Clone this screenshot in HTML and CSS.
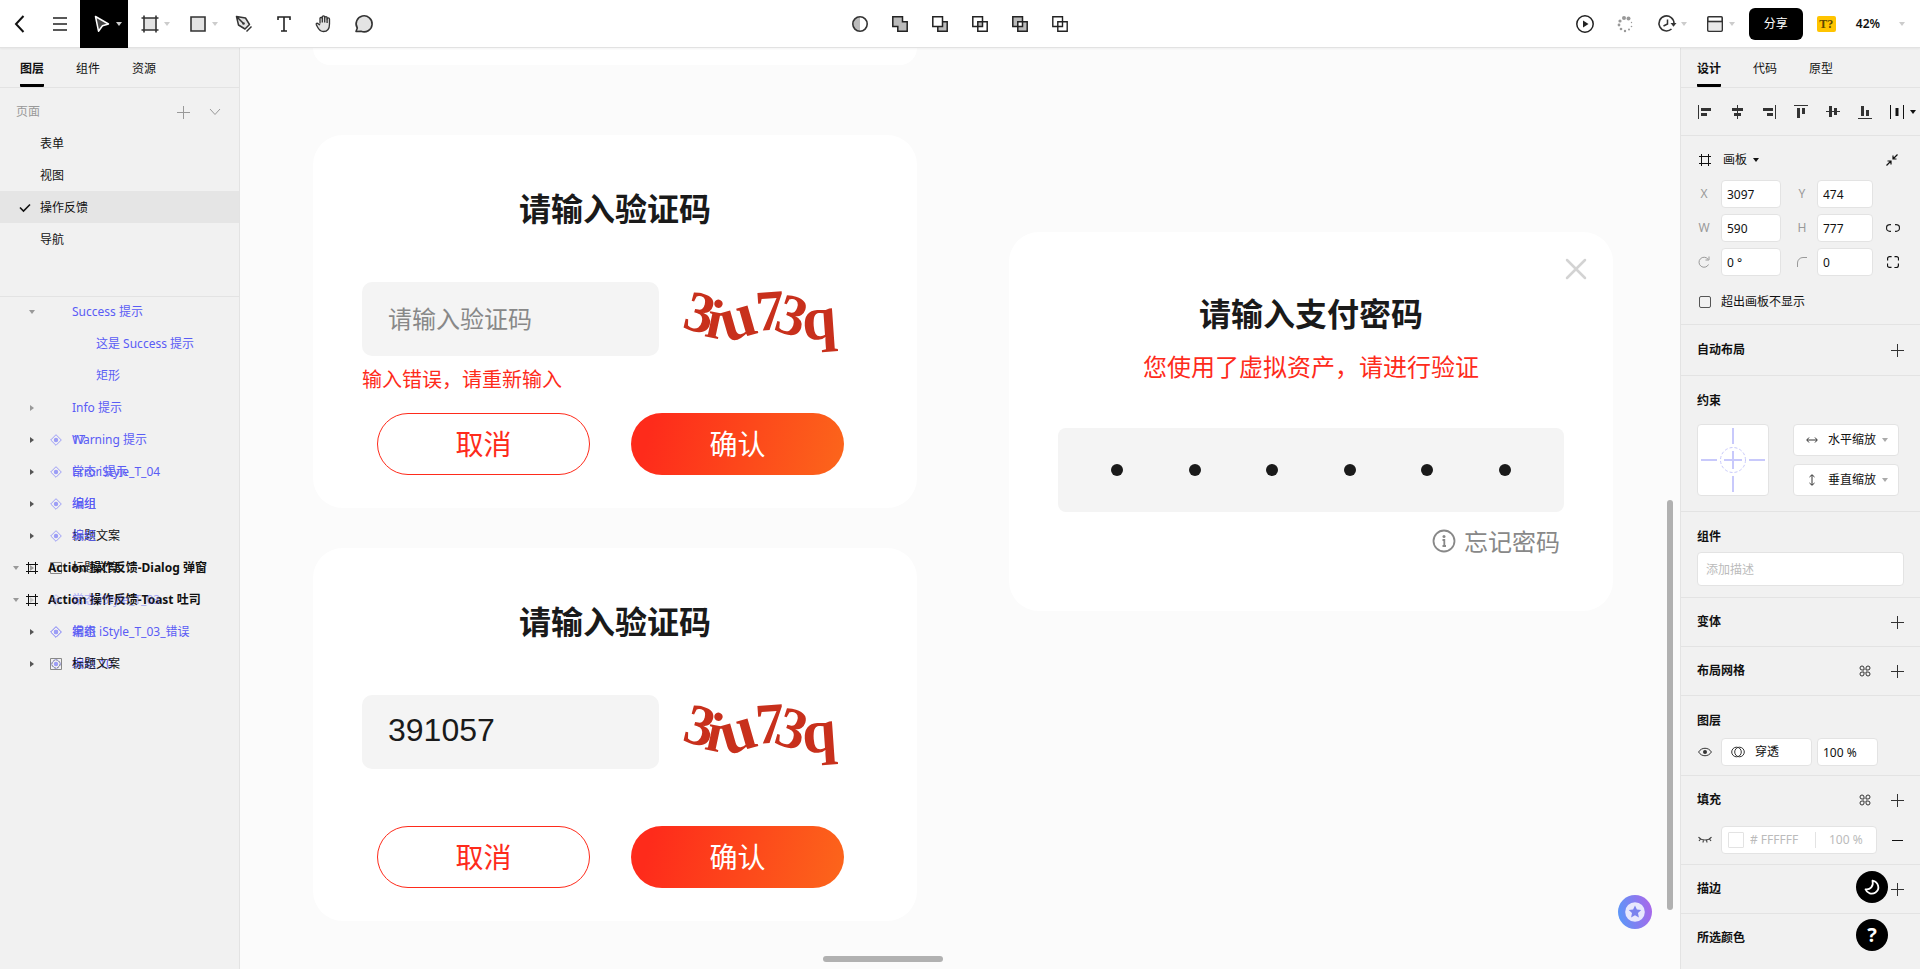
FILE: index.html
```html
<!DOCTYPE html>
<html lang="zh-CN">
<head>
  <meta charset="UTF-8">
  <meta name="viewport" content="width=device-width, initial-scale=1.0">
  <title>操作反馈</title>
  <link rel="stylesheet" href="styles.css">
</head>

<body>
  <!-- shared icons -->
  <svg class="sprite" width="0" height="0" aria-hidden="true">
    <symbol id="i-down" viewBox="0 0 6 4"><path d="M0 0h6L3 4z" fill="currentColor"/></symbol>
    <symbol id="i-right" viewBox="0 0 4 6"><path d="M0 0l4 3-4 3z" fill="currentColor"/></symbol>
    <symbol id="i-plus" viewBox="0 0 13 13"><path d="M6.5 0v13M0 6.5h13" fill="none" stroke="currentColor"/></symbol>
    <symbol id="i-frame" viewBox="0 0 12 12"><path d="M2.500 0v12M9.500 0v12M0 2.500h12M0 9.500h12" fill="none" stroke="currentColor"/></symbol>
    <symbol id="i-comp" viewBox="0 0 12 12"><path d="M6 .7L11.300 6 6 11.300.7 6z" fill="none" stroke="currentColor"/><circle cx="6" cy="6" r="2.200" fill="currentColor"/></symbol>
    <symbol id="i-cmd" viewBox="0 0 12 12"><path d="M5 5H3a2 2 0 1 1 2-2zM7 5V3a2 2 0 1 1 2 2zM7 7h2a2 2 0 1 1-2 2zM5 7v2a2 2 0 1 1-2-2z" fill="none" stroke="currentColor"/></symbol>
  </svg>

  <header class="topbar">
    <div class="tools">
      <button class="tool" aria-label="返回"><svg width="20" height="20" viewBox="0 0 20 20"><path d="M13.500 2L6 10l7.500 8" fill="none" stroke="#111" stroke-width="2"/></svg></button>
      <button class="tool" aria-label="菜单"><svg width="14" height="16" viewBox="0 0 14 16"><path d="M0 2h14M0 8h14M0 14h14" stroke="#222" stroke-width="1.700"/></svg></button>
      <button class="tool tool-wide active" aria-label="选择">
        <svg width="20" height="20" viewBox="0 0 20 20"><path d="M3.500 2.500l13 7.500-6 1.800-4 5.400z" fill="#444" stroke="#fff" stroke-width="1.500" stroke-linejoin="round"/></svg>
        <svg class="caret" width="6" height="4"><use href="#i-down"/></svg>
      </button>
      <button class="tool tool-wide" aria-label="画板">
        <svg width="20" height="20" viewBox="0 0 20 20"><path d="M4 4h12v12H4z" fill="#e3e3e3"/><path d="M4 1.500v17M16 1.500v17M1.500 4h17M1.500 16h17" stroke="#333" stroke-width="1.600"/></svg>
        <svg class="caret" width="6" height="4"><use href="#i-down"/></svg>
      </button>
      <button class="tool tool-wide" aria-label="矩形">
        <svg width="20" height="20" viewBox="0 0 20 20"><path d="M3 3h14v14H3z" fill="#e3e3e3" stroke="#333" stroke-width="1.600"/></svg>
        <svg class="caret" width="6" height="4"><use href="#i-down"/></svg>
      </button>
      <button class="tool" aria-label="钢笔"><svg width="20" height="20" viewBox="0 0 20 20"><path d="M2.500 2.500l9 1.500 4 6.500-4.500 4.500-6.500-4zM3 3l6 6" fill="#e3e3e3" stroke="#333" stroke-width="1.500" stroke-linejoin="round"/><circle cx="9.500" cy="9.500" r="1.300" fill="#333"/><path d="M12.500 17.500l5-5" stroke="#333" stroke-width="1.500"/></svg></button>
      <button class="tool" aria-label="文本"><svg width="20" height="20" viewBox="0 0 20 20"><path d="M4 6V3h12v3M10 3v14M7 17h6" fill="none" stroke="#222" stroke-width="1.600"/></svg></button>
      <button class="tool" aria-label="抓手"><svg width="20" height="20" viewBox="0 0 20 20"><path d="M6 9.500V4.300a1.200 1.200 0 0 1 2.300 0V3a1.200 1.200 0 0 1 2.400 0v.8a1.200 1.200 0 0 1 2.400 0v1.300a1.200 1.200 0 0 1 2.400 0V10c0 5-2 7.500-6 7.500-3 0-4.500-1.500-6-4.500L2.300 10.600c-.4-1 .8-1.800 1.700-1L6 11" fill="#e3e3e3" stroke="#333" stroke-width="1.300" stroke-linejoin="round"/><path d="M8.300 4v4.500M10.700 3.500v5M13.100 4.500v4.500" stroke="#333" stroke-width="1.300"/></svg></button>
      <button class="tool" aria-label="评论"><svg width="20" height="20" viewBox="0 0 20 20"><path d="M2 17.500L3.300 14A8 8 0 1 1 7 17.200z" fill="#e3e3e3" stroke="#333" stroke-width="1.600" stroke-linejoin="round"/></svg></button>
    </div>

    <div class="tools tools-center">
      <button class="tool" aria-label="蒙版"><svg width="18" height="18" viewBox="0 0 18 18"><path d="M9 2a7 7 0 0 0 0 14z" fill="#bbb"/><circle cx="9" cy="9" r="7.200" fill="none" stroke="#333" stroke-width="1.600"/></svg></button>
      <button class="tool" aria-label="联集"><svg width="18" height="18" viewBox="0 0 18 18"><path d="M1.800 1.800h9.700v5h4.700v9.400H6.800v-4.700h-5z" fill="#bbb" stroke="#222" stroke-width="1.500"/></svg></button>
      <button class="tool" aria-label="减去顶层"><svg width="18" height="18" viewBox="0 0 18 18"><path d="M6.800 6.800h9.400v9.400H6.800z" fill="#bbb" stroke="#222" stroke-width="1.500"/><path d="M1.800 1.800h9.700v9.700H1.800z" fill="#fff" stroke="#222" stroke-width="1.500"/></svg></button>
      <button class="tool" aria-label="交集"><svg width="18" height="18" viewBox="0 0 18 18"><path d="M6.800 6.800h4.700v4.700H6.800z" fill="#bbb"/><path d="M1.800 1.800h9.700v9.700H1.800zM6.800 6.800h9.400v9.400H6.800z" fill="none" stroke="#222" stroke-width="1.500"/></svg></button>
      <button class="tool" aria-label="差集"><svg width="18" height="18" viewBox="0 0 18 18"><path d="M1.800 1.800h9.700v9.700H1.800zM6.800 6.800h9.400v9.400H6.800z" fill="#bbb"/><path d="M6.800 6.800h4.700v4.700H6.800z" fill="#fff"/><path d="M1.800 1.800h9.700v9.700H1.800zM6.800 6.800h9.400v9.400H6.800z" fill="none" stroke="#222" stroke-width="1.500"/></svg></button>
      <button class="tool" aria-label="拼合"><svg width="18" height="18" viewBox="0 0 18 18"><path d="M1.800 1.800h9.700v9.700H1.800zM6.800 6.800h9.400v9.400H6.800z" fill="none" stroke="#222" stroke-width="1.400"/></svg></button>
    </div>

    <div class="tools tools-right">
      <button class="tool" aria-label="播放"><svg width="20" height="20" viewBox="0 0 20 20"><circle cx="10" cy="10" r="8.200" fill="none" stroke="#222" stroke-width="1.500"/><path d="M8 6.500l5.500 3.500L8 13.500z" fill="#222"/></svg></button>
      <span class="tool"><svg width="18" height="18" viewBox="0 0 18 18" fill="#999"><circle cx="8" cy="3" r="2"/><circle cx="12.500" cy="3.500" r="2"/><circle cx="4" cy="6" r="1.600"/><circle cx="3" cy="10" r="1.400"/><circle cx="5" cy="14" r="1.300"/><circle cx="9" cy="16" r="1.200"/><circle cx="13" cy="14.500" r="1"/><circle cx="15.500" cy="11.500" r=".8"/><circle cx="15.500" cy="7.500" r=".7"/></svg></span>
      <button class="tool tool-wide" aria-label="历史">
        <svg width="20" height="20" viewBox="0 0 20 20"><path d="M14.500 15A7.500 7.500 0 1 1 17 9.500" fill="none" stroke="#333" stroke-width="1.600"/><path d="M13.500 9h6l-3 3.700z" fill="#333"/><path d="M10.500 5.500V10L6.500 12" fill="none" stroke="#333" stroke-width="1.500"/></svg>
        <svg class="caret" width="6" height="4"><use href="#i-down"/></svg>
      </button>
      <button class="tool tool-wide" aria-label="布局">
        <svg width="20" height="20" viewBox="0 0 20 20"><rect x="2.800" y="2.800" width="14.400" height="14.400" rx="1" fill="#fff" stroke="#333" stroke-width="1.600"/><path d="M3.600 8h12.800v8.400H3.600z" fill="#e9e9e9"/><path d="M3 7.500h14" stroke="#333" stroke-width="1.600"/></svg>
        <svg class="caret" width="6" height="4"><use href="#i-down"/></svg>
      </button>
      <button class="share">分享</button>
      <span class="font-badge">T?</span>
      <button class="zoom-level">42% <svg class="caret" width="6" height="4"><use href="#i-down"/></svg></button>
    </div>
  </header>

  <div class="workspace">
    <aside class="panel panel-left">
      <nav class="tabs">
        <a href="#layers" class="tab current">图层</a>
        <a href="#components" class="tab">组件</a>
        <a href="#assets" class="tab">资源</a>
      </nav>

      <div class="pages">
        <div class="pages-head">
          <span>页面</span>
          <button aria-label="添加页面"><svg width="13" height="13"><use href="#i-plus"/></svg></button>
          <button aria-label="收起"><svg width="12" height="8" viewBox="0 0 12 8"><path d="M1 1l5 5.500L11 1" fill="none" stroke="currentColor"/></svg></button>
        </div>
        <a href="#form" class="page">表单</a>
        <a href="#view" class="page">视图</a>
        <a href="#feedback" class="page selected"><svg width="12" height="10" viewBox="0 0 12 10"><path d="M1 4.500L4.500 8 11 1.500" fill="none" stroke="#111" stroke-width="1.600"/></svg>操作反馈</a>
        <a href="#nav" class="page">导航</a>
      </div>

      <div class="layers">
        <div class="row"><div class="layer comp dim"><svg class="fold" width="6" height="4"><use href="#i-down"/></svg><span class="name">Success 提示</span></div></div>
        <div class="row"><div class="layer comp deep"><span class="name">这是 Success 提示</span></div></div>
        <div class="row"><div class="layer comp deep"><span class="name">矩形</span></div></div>
        <div class="row"><div class="layer comp dim"><svg class="fold" width="4" height="6"><use href="#i-right"/></svg><span class="name">Info 提示</span></div></div>
        <div class="row">
          <div class="layer comp"><span class="name">17</span></div>
          <div class="layer comp"><svg class="fold" width="4" height="6"><use href="#i-right"/></svg><svg class="kind" width="12" height="12"><use href="#i-comp"/></svg><span class="name">Warning 提示</span></div>
        </div>
        <div class="row">
          <div class="layer comp"><span class="name">Error 提示</span></div>
          <div class="layer comp"><svg class="fold" width="4" height="6"><use href="#i-right"/></svg><svg class="kind" width="12" height="12"><use href="#i-comp"/></svg><span class="name">常态 iStyle_T_04</span></div>
        </div>
        <div class="row">
          <div class="layer comp"><span class="name">编组</span></div>
          <div class="layer comp"><svg class="fold" width="4" height="6"><use href="#i-right"/></svg><svg class="kind" width="12" height="12"><use href="#i-comp"/></svg><span class="name">编组</span></div>
        </div>
        <div class="row">
          <div class="layer"><span class="name">标题文案</span></div>
          <div class="layer comp"><svg class="fold" width="4" height="6"><use href="#i-right"/></svg><svg class="kind" width="12" height="12"><use href="#i-comp"/></svg><span class="name">编组</span></div>
        </div>
        <div class="row">
          <div class="layer dim"><svg class="fold" width="4" height="6"><use href="#i-right"/></svg><svg class="kind box" width="12" height="12" viewBox="0 0 12 12"><path d="M.5.5h11v11H.5z" fill="none" stroke="currentColor"/><path d="M3.500 3.500h5v5h-5z" fill="none" stroke="currentColor" stroke-dasharray="1 1"/></svg><span class="name">标题文案</span></div>
          <div class="layer board"><svg class="fold" width="6" height="4"><use href="#i-down"/></svg><svg class="kind" width="12" height="12"><use href="#i-frame"/></svg><span class="name">Action 操作反馈-Dialog 弹窗</span></div>
        </div>
        <div class="row">
          <div class="layer comp faint dim"><svg class="fold" width="4" height="6"><use href="#i-right"/></svg><svg class="kind" width="12" height="12"><use href="#i-comp"/></svg><span class="name">常态 iStyle_T_03</span></div>
          <div class="layer board"><svg class="fold" width="6" height="4"><use href="#i-down"/></svg><svg class="kind" width="12" height="12"><use href="#i-frame"/></svg><span class="name">Action 操作反馈-Toast 吐司</span></div>
        </div>
        <div class="row">
          <div class="layer comp"><svg class="kind" width="12" height="12"><use href="#i-comp"/></svg><span class="name">编组</span></div>
          <div class="layer comp"><svg class="fold" width="4" height="6"><use href="#i-right"/></svg><svg class="kind" width="12" height="12"><use href="#i-comp"/></svg><span class="name">常态 iStyle_T_03_错误</span></div>
        </div>
        <div class="row">
          <div class="layer comp"><svg class="kind" width="12" height="12"><use href="#i-comp"/></svg><span class="name">编组 10</span></div>
          <div class="layer"><svg class="fold" width="4" height="6"><use href="#i-right"/></svg><svg class="kind box" width="12" height="12" viewBox="0 0 12 12"><path d="M.5.5h11v11H.5z" fill="none" stroke="currentColor"/><circle cx="6" cy="6" r="4" fill="none" stroke="currentColor" stroke-dasharray="2 1"/></svg><span class="name">标题文案</span></div>
        </div>
      </div>
    </aside>

    <main class="canvas">
      <div class="column">
        <section class="card card-cut"></section>

        <section class="card">
          <h2 class="card-title">请输入验证码</h2>
          <div class="captcha-row">
            <input class="field" type="text" placeholder="请输入验证码" aria-label="验证码">
            <svg class="captcha" width="160" height="76" viewBox="0 0 160 76" role="img" aria-label="3iu73q">
              <text x="21" y="50" font-size="58" transform="rotate(15 21 31)">3</text>
              <text x="36" y="56" font-size="56" transform="rotate(12 36 37)">i</text>
              <text x="60" y="56" font-size="64" transform="rotate(-16 60 42)">u</text>
              <text x="91" y="48" font-size="58" transform="rotate(-4 91 29)">7</text>
              <text x="113" y="53" font-size="58" transform="rotate(18 113 34)">3</text>
              <text x="141" y="57" font-size="62" transform="rotate(-4 141 49)">q</text>
            </svg>
          </div>
          <p class="error">输入错误，请重新输入</p>
          <div class="actions">
            <button class="btn">取消</button>
            <button class="btn btn-primary">确认</button>
          </div>
        </section>

        <section class="card">
          <h2 class="card-title">请输入验证码</h2>
          <div class="captcha-row">
            <input class="field" type="text" value="391057" aria-label="验证码">
            <svg class="captcha" width="160" height="76" viewBox="0 0 160 76" role="img" aria-label="3iu73q">
              <text x="21" y="50" font-size="58" transform="rotate(15 21 31)">3</text>
              <text x="36" y="56" font-size="56" transform="rotate(12 36 37)">i</text>
              <text x="60" y="56" font-size="64" transform="rotate(-16 60 42)">u</text>
              <text x="91" y="48" font-size="58" transform="rotate(-4 91 29)">7</text>
              <text x="113" y="53" font-size="58" transform="rotate(18 113 34)">3</text>
              <text x="141" y="57" font-size="62" transform="rotate(-4 141 49)">q</text>
            </svg>
          </div>
          <p class="error"></p>
          <div class="actions">
            <button class="btn">取消</button>
            <button class="btn btn-primary">确认</button>
          </div>
        </section>
      </div>

      <div class="column column-pay">
        <section class="card card-pay">
          <button class="close" aria-label="关闭"><svg width="22" height="22" viewBox="0 0 22 22"><path d="M2 2l18 18M20 2L2 20" stroke="#d3d3d3" stroke-width="2.500" stroke-linecap="round"/></svg></button>
          <h2 class="card-title">请输入支付密码</h2>
          <p class="notice">您使用了虚拟资产，请进行验证</p>
          <div class="pin">
            <i></i><i></i><i></i><i></i><i></i><i></i>
          </div>
          <a href="#forgot" class="forgot"><svg width="24" height="24" viewBox="0 0 24 24"><circle cx="12" cy="12" r="10.500" fill="none" stroke="#888" stroke-width="1.800"/><circle cx="12" cy="7.500" r="1.500" fill="#888"/><path d="M10.500 11h1.800v6M10.500 17h3.500" fill="none" stroke="#888" stroke-width="1.800"/></svg>忘记密码</a>
        </section>
      </div>

      <div class="scroll scroll-y"></div>
      <div class="scroll scroll-x"></div>
      <button class="assistant" aria-label="助手">
        <svg width="34" height="34" viewBox="0 0 34 34">
          <defs><linearGradient id="glow" x1="0" y1=".6" x2="1" y2=".4"><stop offset="0" stop-color="#5c97f8"/><stop offset="1" stop-color="#a868ea"/></linearGradient></defs>
          <circle cx="17" cy="17" r="17" fill="url(#glow)"/>
          <circle cx="17" cy="17" r="9.800" fill="#e8e8fd"/>
          <path d="M17 10.500l1.900 4 4.300.5-3.200 3 .9 4.400-3.900-2.200-3.900 2.200.9-4.400-3.200-3 4.300-.5z" fill="#7a82ee"/>
        </svg>
      </button>
    </main>

    <aside class="panel panel-right">
      <nav class="tabs">
        <a href="#design" class="tab current">设计</a>
        <a href="#code" class="tab">代码</a>
        <a href="#prototype" class="tab">原型</a>
      </nav>

      <div class="align-bar">
        <button aria-label="左对齐"><svg width="14" height="14" viewBox="0 0 14 14"><path d="M.5 0v14" stroke="#333"/><path d="M3 3h10v3H3zM3 8h6v3H3z" fill="#333"/></svg></button>
        <button aria-label="水平居中"><svg width="14" height="14" viewBox="0 0 14 14"><path d="M7.500 0v14" stroke="#333"/><path d="M2 3h11v3H2zM4 8h7v3H4z" fill="#333"/></svg></button>
        <button aria-label="右对齐"><svg width="14" height="14" viewBox="0 0 14 14"><path d="M13.500 0v14" stroke="#333"/><path d="M1 3h10v3H1zM5 8h6v3H5z" fill="#333"/></svg></button>
        <button aria-label="顶对齐"><svg width="14" height="14" viewBox="0 0 14 14"><path d="M0 .5h14" stroke="#333"/><path d="M3 3h3v10H3zM8 3h3v6H8z" fill="#333"/></svg></button>
        <button aria-label="垂直居中"><svg width="14" height="14" viewBox="0 0 14 14"><path d="M0 6.500h14" stroke="#333"/><path d="M3 1h3v11H3zM8 3h3v7H8z" fill="#333"/></svg></button>
        <button aria-label="底对齐"><svg width="14" height="14" viewBox="0 0 14 14"><path d="M0 13.500h14" stroke="#333"/><path d="M3 1h3v10H3zM8 5h3v6H8z" fill="#333"/></svg></button>
        <button aria-label="分布"><svg width="14" height="14" viewBox="0 0 14 14"><path d="M.5 0v14M13.500 0v14" stroke="#111"/><path d="M5.500 3h3v8h-3z" fill="#111"/></svg></button>
        <svg class="more" width="6" height="4"><use href="#i-down"/></svg>
      </div>

      <div class="section geometry">
        <div class="frame-kind">
          <svg width="12" height="12"><use href="#i-frame"/></svg>
          <button>画板 <svg width="6" height="4"><use href="#i-down"/></svg></button>
          <svg width="12" height="12" viewBox="0 0 12 12"><path d="M11.500.5L7.500 4.500M7 1.500V5h3.500M.5 11.500l4-4M1.500 7H5v3.500" fill="none" stroke="#111" stroke-width="1.200"/></svg>
        </div>
        <div class="props">
          <label for="px">X</label><input id="px" value="3097">
          <label for="py">Y</label><input id="py" value="474"><span></span>
          <label for="pw">W</label><input id="pw" value="590">
          <label for="ph">H</label><input id="ph" value="777">
          <button aria-label="锁定比例"><svg width="14" height="8" viewBox="0 0 14 8"><path d="M5 .700H3.800a3.300 3.300 0 0 0 0 6.600H5M9 .700h1.200a3.300 3.300 0 0 1 0 6.600H9" fill="none" stroke="#222" stroke-width="1.200"/></svg></button>
          <label for="pr" aria-label="旋转"><svg width="12" height="12" viewBox="0 0 12 12"><path d="M10.500 8.500A5 5 0 1 1 10 3.200M11 .5V4H7.500" fill="none" stroke="currentColor"/></svg></label><input id="pr" value="0 °">
          <label for="pc" aria-label="圆角"><svg width="10" height="10" viewBox="0 0 10 10"><path d="M.5 10V6A5.500 5.500 0 0 1 6 .5h4" fill="none" stroke="currentColor"/></svg></label><input id="pc" value="0">
          <button aria-label="独立圆角"><svg width="12" height="12" viewBox="0 0 12 12"><path d="M.6 4.500V2.600a2 2 0 0 1 2-2h2M7.500.6h2a2 2 0 0 1 2 2v2M11.400 7.500v2a2 2 0 0 1-2 2h-2M4.500 11.400h-2a2 2 0 0 1-2-2v-2" fill="none" stroke="#111" stroke-width="1.200"/></svg></button>
        </div>
        <label class="clip"><input type="checkbox">超出画板不显示</label>
      </div>

      <div class="section">
        <div class="head head-tall"><h3>自动布局</h3><button aria-label="添加"><svg width="13" height="13"><use href="#i-plus"/></svg></button></div>
      </div>

      <div class="section constraints">
        <div class="head head-tall"><h3>约束</h3></div>
        <div class="constraint-body">
          <div class="pinbox">
            <svg width="64" height="64" viewBox="0 0 64 64" fill="none" stroke="#c8c9fb" stroke-width="2"><path d="M32 0v16M32 48v16M0 32h16M48 32h16M32 23v18M23 32h18"/><circle cx="32" cy="32" r="12.500" stroke-width="1" stroke-dasharray="3 2"/></svg>
          </div>
          <div class="selects">
            <label class="select"><svg width="12" height="6" viewBox="0 0 12 6"><path d="M1 3h10M3 .5L.7 3 3 5.500M9 .5L11.300 3 9 5.500" fill="none" stroke="#333"/></svg><select aria-label="水平约束"><option>水平缩放</option></select><svg class="arrow" width="6" height="4"><use href="#i-down"/></svg></label>
            <label class="select"><svg width="12" height="12" viewBox="0 0 12 12"><path d="M6 1v10M3.500 3L6 .7 8.500 3M3.500 9L6 11.300 8.500 9" fill="none" stroke="#333"/></svg><select aria-label="垂直约束"><option>垂直缩放</option></select><svg class="arrow" width="6" height="4"><use href="#i-down"/></svg></label>
          </div>
        </div>
      </div>

      <div class="section component">
        <div class="head"><h3>组件</h3></div>
        <input class="desc" type="text" placeholder="添加描述" aria-label="组件描述">
      </div>

      <div class="section">
        <div class="head"><h3>变体</h3><button aria-label="添加"><svg width="13" height="13"><use href="#i-plus"/></svg></button></div>
      </div>
      <div class="section">
        <div class="head"><h3>布局网格</h3><button aria-label="样式"><svg width="12" height="12"><use href="#i-cmd"/></svg></button><button aria-label="添加"><svg width="13" height="13"><use href="#i-plus"/></svg></button></div>
      </div>

      <div class="section blend">
        <div class="head"><h3>图层</h3></div>
        <div class="line">
          <button aria-label="可见"><svg width="14" height="10" viewBox="0 0 14 10"><path d="M.6 5C3.500 0 10.500 0 13.400 5 10.500 10 3.500 10 .6 5z" fill="none" stroke="#333"/><circle cx="7" cy="5" r="2" fill="#333"/></svg></button>
          <label class="select"><svg width="14" height="12" viewBox="0 0 14 12" fill="none" stroke="#333"><circle cx="5.500" cy="6" r="4.800"/><circle cx="8.500" cy="6" r="4.800"/></svg><select aria-label="混合模式"><option>穿透</option></select></label>
          <input class="opacity" value="100 %" aria-label="不透明度">
        </div>
      </div>

      <div class="section fill">
        <div class="head"><h3>填充</h3><button aria-label="样式"><svg width="12" height="12"><use href="#i-cmd"/></svg></button><button aria-label="添加"><svg width="13" height="13"><use href="#i-plus"/></svg></button></div>
        <div class="line">
          <button aria-label="隐藏"><svg width="14" height="8" viewBox="0 0 14 8"><path d="M.5 1c3 4 10 4 13 0M2.500 3L1 5M5.500 4L5 6.500M8.500 4L9 6.500M11.500 3L13 5" fill="none" stroke="#444" stroke-width="1.200"/></svg></button>
          <div class="color">
            <span class="swatch"></span>
            <input class="hex" value="# FFFFFF" aria-label="颜色">
            <input class="alpha" value="100 %" aria-label="填充不透明度">
          </div>
          <button class="minus" aria-label="移除"><svg width="11" height="1"><path d="M0 .5h11" stroke="#111"/></svg></button>
        </div>
      </div>

      <div class="section">
        <div class="head"><h3>描边</h3><button aria-label="添加"><svg width="13" height="13"><use href="#i-plus"/></svg></button></div>
      </div>
      <div class="section section-last">
        <div class="head"><h3>所选颜色</h3></div>
      </div>

      <div class="floating">
        <button aria-label="深色模式"><svg width="18" height="18" viewBox="0 0 18 18"><path d="M9.500 2.500c6 1.500 8 8.500 3 12-3.500 2.300-8.500 1-10-3.200 4.500 1 8.500-3.300 7-8.800z" fill="none" stroke="#fff" stroke-width="1.800" stroke-linejoin="round"/></svg></button>
        <button class="help" aria-label="帮助">?</button>
      </div>
    </aside>
  </div>
</body>
</html>
```

FILE: styles.css
```css
* {
  box-sizing: border-box;
}

html {
  height: 100%;
  overflow: hidden;
}

body {
  margin: 0;
  height: 100%;
  display: flex;
  flex-direction: column;
  overflow: hidden;
  background: #fbfbfb;
  color: #111;
  font-family: "Noto Sans", "Noto Sans CJK SC", sans-serif;
  font-size: 12px;
  line-height: 16px;
}

button,
input,
select {
  margin: 0;
  padding: 0;
  border: 0;
  outline: 0;
  background: none;
  color: inherit;
  font: inherit;
}

button {
  display: flex;
  align-items: center;
  justify-content: center;
  cursor: pointer;
}

a {
  color: inherit;
  text-decoration: none;
}

h2,
h3,
p {
  margin: 0;
}

svg {
  flex: none;
  display: block;
}

.sprite {
  position: absolute;
}

/* top bar */
.topbar {
  z-index: 2;
  flex: none;
  height: 48px;
  display: grid;
  grid-template-columns: 1fr auto 1fr;
  background: #fff;
  border-bottom: 1px solid #e2e2e2;
  box-shadow: 0 1px 2px rgba(0, 0, 0, 0.05);
}

.tools {
  display: flex;
  align-items: center;
}

.tools-right {
  justify-content: flex-end;
}

.tool {
  display: flex;
  align-items: center;
  justify-content: center;
  width: 40px;
  height: 48px;
}

.tool-wide {
  width: 48px;
  gap: 4px;
  padding-left: 6px;
}

.caret {
  color: #ccc;
}

.active {
  background: #000;
}

.share {
  width: 54px;
  height: 32px;
  margin: 0 14px 0 8px;
  border-radius: 6px;
  background: #000;
  color: #fff;
}

.font-badge {
  width: 19px;
  height: 16px;
  border-radius: 2px;
  background: #ffc400;
  color: #5c4700;
  font-family: "Liberation Serif", serif;
  font-weight: bold;
  text-align: center;
}

.zoom-level {
  gap: 19px;
  padding: 0 15px 0 20px;
  font-weight: 600;
}

/* panels */
.workspace {
  flex: 1;
  min-height: 0;
  display: flex;
  overflow: hidden;
}

.panel {
  flex: none;
  width: 240px;
  overflow: hidden;
  background: #f1f1f1;
}

.panel-left {
  border-right: 1px solid #e3e3e3;
}

.panel-right {
  position: relative;
  border-left: 1px solid #e3e3e3;
}

.tabs {
  display: flex;
  gap: 32px;
  height: 40px;
  padding-left: 20px;
  border-bottom: 1px solid #e3e3e3;
}

.panel-right .tabs {
  padding-left: 16px;
}

.tab {
  padding-top: 13px;
}

.current {
  border-bottom: 3px solid #000;
  border-radius: 1px;
  font-weight: 700;
}

.pages {
  height: 209px;
  padding-top: 4px;
  border-bottom: 1px solid #e3e3e3;
}

.pages-head {
  display: flex;
  align-items: center;
  gap: 19px;
  height: 40px;
  padding: 0 18px 0 16px;
  color: #999;
}

.pages-head span {
  flex: 1;
}

.page {
  display: grid;
  grid-template-columns: 12px 1fr;
  column-gap: 9px;
  align-items: center;
  height: 32px;
  padding: 2px 0 0 19px;
}

.page:not(.selected) {
  grid-template-columns: 1fr;
  padding-left: 40px;
}

.pages-head + .page {
  margin-top: -5px;
}

.selected {
  background: #e5e5e5;
}

/* layer tree: entries that share a row are drawn over each other */
.layers {
  margin-top: -1px;
}

.row {
  display: grid;
  height: 32px;
}

.layer {
  grid-area: 1 / 1;
  display: grid;
  grid-template-columns: 8px 12px 1fr;
  column-gap: 16px;
  align-items: center;
  padding-left: 28px;
}

.fold {
  grid-column: 1;
  justify-self: center;
  color: #555;
}

.dim .fold,
.board .fold {
  color: #999;
}

.kind {
  grid-column: 2;
  margin-left: -2px;
  color: #9c9df6;
}

.box {
  color: #888;
}

.name {
  grid-column: 3;
  grid-row: 1;
  margin-left: -8px;
  white-space: nowrap;
}

.comp .name {
  color: #5a5cf5;
}

.faint {
  opacity: 0.5;
}

.deep {
  padding-left: 52px;
}

.board {
  padding-left: 12px;
  column-gap: 8px;
  font-weight: 700;
}

.board .name {
  margin-left: 0;
}

.board .kind {
  color: #111;
}

/* canvas */
.canvas {
  position: relative;
  flex: 1;
  min-width: 0;
  display: flex;
  gap: 92px;
  padding-left: 73px;
  overflow: hidden;
  font-family: "Noto Sans CJK SC", sans-serif;
}

.column {
  flex: none;
  width: 604px;
}

.column-pay {
  padding-top: 184px;
}

.card {
  height: 373px;
  margin-bottom: 40px;
  padding: 50px 49px 0;
  border-radius: 30px;
  background: #fff;
}

.card-cut {
  height: 17px;
  margin-bottom: 70px;
  padding: 0;
  border-radius: 0 0 30px 30px;
}

.card-title {
  color: #1a1a1a;
  font-size: 32px;
  font-weight: 700;
  line-height: 44px;
  text-align: center;
}

.captcha-row {
  display: flex;
  gap: 20px;
  margin-top: 53px;
}

.field {
  width: 297px;
  height: 74px;
  padding: 0 26px 4px;
  border-radius: 10px;
  background: #f4f4f4;
  color: #1a1a1a;
  font-family: "Liberation Sans", "Noto Sans CJK SC", sans-serif;
  font-size: 32px;
}

.field::placeholder {
  color: #888;
  font-size: 24px;
}

.captcha {
  fill: #c8301c;
  font-family: "Liberation Serif", serif;
  font-weight: bold;
  text-anchor: middle;
}

.error {
  height: 28px;
  margin-top: 7px;
  color: #fe2b1b;
  font-size: 20px;
  line-height: 28px;
}

.actions {
  display: flex;
  gap: 41px;
  margin-top: 20px;
  padding-left: 15px;
}

.btn {
  width: 213px;
  height: 62px;
  padding-bottom: 2px;
  border: 1px solid #fe2b1b;
  border-radius: 31px;
  color: #fe2b1b;
  font-size: 28px;
}

.btn-primary {
  border: 0;
  background: linear-gradient(105deg, #fe2b1b 10%, #fc661b);
  color: #fff;
}

.card-pay {
  position: relative;
  height: 379px;
  padding-top: 58px;
}

.close {
  position: absolute;
  top: 26px;
  right: 26px;
}

.notice {
  margin-top: 15px;
  color: #fe2b1b;
  font-size: 24px;
  line-height: 34px;
  text-align: center;
}

.pin {
  display: flex;
  justify-content: space-between;
  align-items: center;
  height: 84px;
  margin-top: 45px;
  padding: 0 53px;
  border-radius: 8px;
  background: #f4f4f4;
}

.pin i {
  width: 12px;
  height: 12px;
  border-radius: 50%;
  background: #1a1a1a;
}

.forgot {
  display: flex;
  align-items: center;
  justify-content: flex-end;
  gap: 8px;
  margin-top: 12px;
  padding-right: 4px;
  color: #888;
  font-size: 24px;
  line-height: 34px;
}

.scroll {
  position: absolute;
  border-radius: 3px;
  background: #b1b1b1;
}

.scroll-y {
  top: 452px;
  right: 7px;
  width: 6px;
  height: 410px;
}

.scroll-x {
  left: 583px;
  bottom: 7px;
  width: 120px;
  height: 6px;
}

.assistant {
  position: absolute;
  right: 28px;
  bottom: 40px;
}

/* design panel */
.align-bar {
  display: flex;
  align-items: center;
  gap: 18px;
  height: 48px;
  padding-left: 17px;
  border-bottom: 1px solid #e3e3e3;
}

.more {
  margin-left: -12px;
}

.section {
  padding: 0 16px;
  border-bottom: 1px solid #e3e3e3;
}

.section-last {
  border-bottom: 0;
}

.head {
  display: flex;
  align-items: center;
  gap: 20px;
  height: 48px;
}

.head-tall {
  height: 50px;
}

.head h3 {
  flex: 1;
  font-size: 12px;
  font-weight: 700;
}

.head button {
  color: #333;
}

.geometry {
  height: 189px;
  padding-top: 16px;
}

.frame-kind {
  display: flex;
  align-items: center;
  height: 16px;
  margin-bottom: 12px;
  padding: 0 6px 0 2px;
}

.frame-kind button {
  gap: 6px;
  margin: 0 auto 0 12px;
}

.props {
  display: grid;
  grid-template-columns: 14px 60px 14px 56px 14px;
  grid-auto-rows: 28px;
  gap: 6px 10px;
  align-items: center;
}

.props label {
  display: flex;
  justify-content: center;
  color: #999;
}

.props label:nth-of-type(even) {
  margin-left: 8px;
}

.props input {
  width: 100%;
}

.props input:nth-of-type(even) {
  width: 56px;
  margin-left: 2px;
}

.props button {
  width: 14px;
  margin-left: 5px;
}

.props input,
.opacity,
.select,
.color,
.desc {
  height: 28px;
  padding: 0 5px;
  border: 1px solid #e3e3e3;
  border-radius: 4px;
  background: #fff;
}

.clip {
  display: flex;
  align-items: center;
  gap: 10px;
  margin: 18px 0 0 2px;
}

.clip input {
  appearance: none;
  width: 12px;
  height: 12px;
  border: 1px solid #555;
  border-radius: 2px;
}

.constraints {
  height: 136px;
}

.constraint-body {
  display: flex;
  justify-content: space-between;
  margin-top: -2px;
  padding-right: 5px;
}

.pinbox {
  display: grid;
  place-items: center;
  width: 72px;
  height: 72px;
  border: 1px solid #e3e3e3;
  border-radius: 4px;
  background: #fff;
}

.selects {
  display: grid;
  gap: 8px;
  width: 106px;
}

.select {
  display: flex;
  align-items: center;
  gap: 10px;
}

.selects .select {
  height: 32px;
  padding: 0 10px 0 12px;
}

.select select {
  flex: 1;
  min-width: 0;
  appearance: none;
}

.arrow {
  margin-left: -6px;
  color: #aaa;
}

.component {
  height: 86px;
}

.component .head {
  height: 40px;
  padding-top: 10px;
}

.desc {
  width: 100%;
  height: 34px;
  padding: 0 8px;
}

.desc::placeholder {
  color: #bbb;
}

.blend {
  height: 80px;
}

.blend .head {
  height: 42px;
  padding-top: 8px;
}

.fill {
  height: 89px;
}

.fill .line {
  margin-top: 2px;
}

.line {
  display: flex;
  align-items: center;
  gap: 5px;
}

.line > button:first-child {
  width: 14px;
  margin: 0 4px 0 1px;
}

.blend .select {
  width: 91px;
  padding-left: 9px;
}

.opacity {
  width: 61px;
}

.color {
  display: flex;
  align-items: center;
  gap: 6px;
  width: 156px;
  padding-left: 6px;
  color: #bbb;
}

.swatch {
  flex: none;
  width: 16px;
  height: 16px;
  border: 1px solid #e3e3e3;
  border-radius: 1px;
}

.hex {
  width: 66px;
  height: 16px;
  border-right: 1px solid #e3e3e3;
}

.alpha {
  width: 44px;
  padding-left: 7px;
}

.minus {
  margin: 0 1px 0 auto;
}

.floating {
  position: absolute;
  right: 32px;
  bottom: 18px;
  display: grid;
  gap: 16px;
}

.floating button {
  width: 32px;
  height: 32px;
  border-radius: 50%;
  background: #000;
  color: #fff;
}

.help {
  font-size: 20px;
  font-weight: 700;
}
```
